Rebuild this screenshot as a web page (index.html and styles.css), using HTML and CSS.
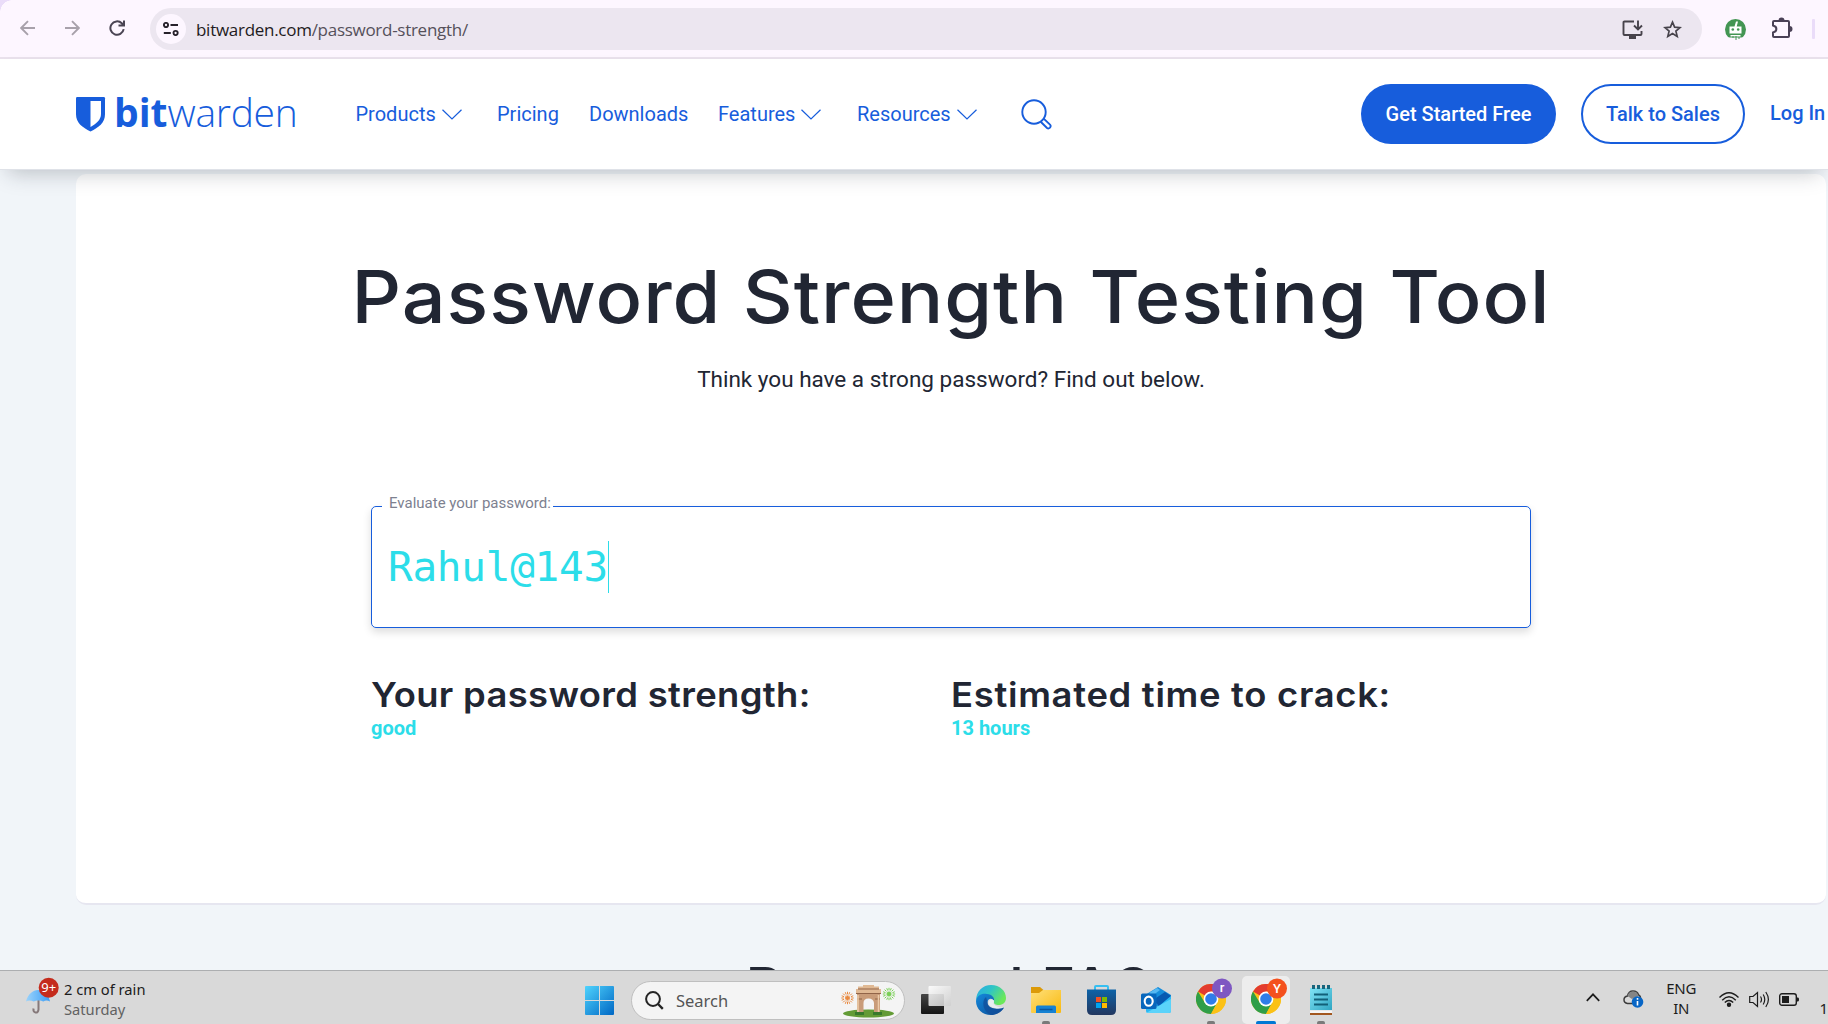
FILE: index.html
```html
<!DOCTYPE html>
<html lang="en">
<head>
<meta charset="utf-8">
<title>Password Strength Testing Tool | Bitwarden</title>
<link rel="stylesheet" href="styles.css">
</head>
<body>
<svg class="defs" width="0" height="0">
  <defs>
    <linearGradient id="win" x1="0" y1="0" x2="1" y2="1"><stop offset="0" stop-color="#4fd3fd"/><stop offset="1" stop-color="#0067c4"/></linearGradient>
    <linearGradient id="edgeTop" x1="0" y1="0" x2="1" y2=".5"><stop offset="0" stop-color="#2aa9e8"/><stop offset=".5" stop-color="#2fc5c5"/><stop offset="1" stop-color="#6be85a"/></linearGradient>
    <linearGradient id="edgeLow" x1="0" y1="0" x2="1" y2="1"><stop offset="0" stop-color="#1489dc"/><stop offset="1" stop-color="#0c4c95"/></linearGradient>
    <linearGradient id="folder" x1="0" y1="0" x2="1" y2="1"><stop offset="0" stop-color="#ffe07a"/><stop offset="1" stop-color="#f9b90f"/></linearGradient>
    <linearGradient id="store" x1="0" y1="0" x2="0" y2="1"><stop offset="0" stop-color="#0d63a8"/><stop offset="1" stop-color="#23375f"/></linearGradient>
    <linearGradient id="note" x1="0" y1="0" x2="1" y2="1"><stop offset="0" stop-color="#82e4f6"/><stop offset="1" stop-color="#2fa5c2"/></linearGradient>
    <linearGradient id="umb" x1="0" y1="0" x2="1" y2="0"><stop offset="0" stop-color="#9bd3fb"/><stop offset="1" stop-color="#3b9df5"/></linearGradient>
    <linearGradient id="dark" x1="0" y1="0" x2="0" y2="1"><stop offset="0" stop-color="#454545"/><stop offset="1" stop-color="#151515"/></linearGradient>
    <linearGradient id="light" x1="0" y1="0" x2="1" y2="1"><stop offset="0" stop-color="#fff"/><stop offset="1" stop-color="#cfcfcf"/></linearGradient>
    <symbol id="chrome" viewBox="0 0 30 30">
      <circle cx="15" cy="15" r="15" fill="#fbc116"/>
      <path d="M15 15 2 7.5A15 15 0 0 1 28 7.5L15 8z" fill="#e33b2e"/>
      <path d="M2 7.5A15 15 0 0 0 15 30L21.3 18.5 15 15 8.7 18.5z" fill="#2f9e48"/>
      <path d="M15 30A15 15 0 0 0 28 7.5H15L21.3 18.5z" fill="#fbc116"/>
      <circle cx="15" cy="15" r="7.4" fill="#fff"/>
      <circle cx="15" cy="15" r="5.8" fill="#2f7de9"/>
    </symbol>
    <symbol id="chev" viewBox="0 0 20 11"><path d="M.5.8 10 10 19.500.8" fill="none" stroke="#175ddc" stroke-width="1.2"/></symbol>
  </defs>
</svg>

<div class="toolbar">
  <div class="tab-corner"></div>
  <svg class="back" width="16" height="16" viewBox="0 0 16 16" fill="none" stroke="#a8a1ab" stroke-width="1.9"><path d="M15 8H1.500M8 1.200 1.200 8 8 14.800"/></svg>
  <svg class="fwd" width="16" height="16" viewBox="0 0 16 16" fill="none" stroke="#a8a1ab" stroke-width="1.900"><path d="M1 8h13.500M8 1.200 14.800 8 8 14.800"/></svg>
  <svg class="reload" width="16" height="16" viewBox="0 0 16 16" fill="none" stroke="#4a4453" stroke-width="2"><path d="M14.700 9.200A6.700 6.700 0 1 1 12.800 3.300L14.500 5M15 .5V5.500H9.500"/></svg>
  <div class="omnibox">
    <div class="site-info"><svg width="16" height="14" viewBox="0 0 16 14" fill="none" stroke="#27222b" stroke-width="1.900"><circle cx="3" cy="3" r="2.100"/><path d="M7.500 3H15M.8 11h7"/><circle cx="12.600" cy="11" r="2.100"/></svg></div>
    <div class="url"><span class="host">bitwarden.com</span><span class="path">/password-strength/</span></div>
    <svg class="install" width="21" height="19" viewBox="0 0 21 19" fill="none" stroke="#47434b" stroke-width="1.900"><path d="M12 1.500H2.500Q1.500 1.500 1.500 2.500V14Q1.500 15 2.500 15H18.500Q19.500 15 19.500 14V11M16 .5V9M12 5.500 16 9.500 20 5.500"/><path d="M7 17.500H14" stroke-width="3"/></svg>
    <svg class="star" width="19" height="19" viewBox="0 0 19 19" fill="none" stroke="#47434b" stroke-width="1.700"><path d="M9.500 2.200 11.600 7.100 17 7.600 12.900 11.100 14.200 16.400 9.500 13.600 4.800 16.400 6.100 11.100 2 7.600 7.400 7.100z"/></svg>
  </div>
  <svg class="bot" width="21" height="21" viewBox="0 0 21 21"><circle cx="10.500" cy="10.500" r="10.500" fill="#439553"/><path d="M4.500 7.500h5l1.500-5h2l-1.300 5H16.500V14.500H4.500zM5.500 16h10v1.600h-10z" fill="#fff"/><path d="M3 18.500h15L16 21H4z" fill="#fdf6ff"/><circle cx="7.800" cy="10.500" r="1.300" fill="#439553"/><circle cx="13.200" cy="10.500" r="1.300" fill="#439553"/><path d="M8 19v-2M11 21v-4M14 20v-2" stroke="#439553"/></svg>
  <svg class="puzzle" width="22" height="22" viewBox="0 0 22 22"><path d="M3.500 4H17Q18 4 18 5V19Q18 20 17 20H3Q2 20 2 19V15.500C6.500 14.500 6.500 9.500 2 8.500V5Q2 4 3 4z" fill="none" stroke="#4a4156" stroke-width="2"/><path d="M7.500 3.500a3 3 0 0 1 6 0zM18.500 9a3 3 0 0 1 0 6z" fill="#4a4156"/></svg>
  <div class="divider"></div>
</div>

<header class="site-header">
  <a class="logo">
    <svg width="30" height="35" viewBox="0 0 30 35"><path d="M1.200 0H27.800Q29 0 29 1.200V17C29 26 22.500 30.500 14.500 34.500 6.500 30.500 0 26 0 17V1.200Q0 0 1.200 0z" fill="#175ddc"/><path d="M14.500 4H25V17C25 23 20 26.700 14.500 30z" fill="#fff"/></svg>
    <span class="bit">bit</span><span class="warden">warden</span>
  </a>
  <nav class="nav">
    <a class="n1">Products<svg width="20" height="11"><use href="#chev"/></svg></a>
    <a class="n2">Pricing</a>
    <a class="n3">Downloads</a>
    <a class="n4">Features<svg width="20" height="11"><use href="#chev"/></svg></a>
    <a class="n5">Resources<svg width="20" height="11"><use href="#chev"/></svg></a>
    <svg class="search" width="31" height="31" viewBox="0 0 31 31" fill="none" stroke="#175ddc" stroke-width="1.900"><circle cx="13" cy="13" r="11.700"/><path d="M19.700 22.800 26 29Q27.500 30 29 28.600 30.300 27 29 25.700L22.700 19.600"/></svg>
  </nav>
  <div class="actions">
    <a class="btn primary">Get Started Free</a>
    <a class="btn outline">Talk to Sales</a>
    <a class="login">Log In</a>
  </div>
</header>

<main class="page">
  <section class="card">
    <h1>Password Strength Testing Tool</h1>
    <p class="sub">Think you have a strong password? Find out below.</p>
    <div class="field">
      <span class="label">Evaluate your password:</span>
      <span class="value">Rahul@143</span><span class="caret"></span>
    </div>
    <div class="results">
      <div><h3 class="r1">Your password strength:</h3><p>good</p></div>
      <div><h3 class="r2">Estimated time to crack:</h3><p>13 hours</p></div>
    </div>
  </section>
  <h2>Password FAQ</h2>
</main>

<footer class="taskbar">
  <div class="weather">
    <svg width="36" height="40" viewBox="0 0 36 40"><path d="M12.500 15V33.500Q12 37 9.500 36.500 7 36 7.500 32.500" fill="none" stroke="#86797a" stroke-width="2"/><path d="M0 25.500C2 18 7 14 12 14S22.500 18 24 25.500C22 24 19 24 17.500 25.500 15 24 10 24 7.500 25.500 5.500 24 2 24 0 25.500z" fill="url(#umb)"/><circle cx="22.700" cy="11.700" r="10" fill="#c42b1c"/><text x="22.800" y="16.300" text-anchor="middle" class="badge-text">9+</text></svg>
    <div class="weather-text"><span class="w1">2 cm of rain</span><span class="w2">Saturday</span></div>
  </div>
  <div class="apps">
    <div class="app"><svg width="29" height="29" viewBox="0 0 29 29"><path d="M1 0H14V14H0V1Q0 0 1 0zM15 0H28Q29 0 29 1V14H15zM0 15H14V29H1Q0 29 0 28zM15 15H29V28Q29 29 28 29H15z" fill="url(#win)"/></svg></div>
    <div class="searchbox">
      <svg width="19" height="19" viewBox="0 0 19 19" fill="none" stroke="#242424" stroke-width="2"><circle cx="8" cy="8" r="6.900"/><path d="M13 13 17.800 17.800" stroke-width="2.400"/></svg>
      <span>Search</span>
      <svg class="gate" width="58" height="34" viewBox="0 0 58 34">
        <g stroke="#e9893f" stroke-width="1" stroke-dasharray="2.500 1.200"><path d="M7.500 14V7M7.500 14V21M7.500 14H.5M7.500 14H14.500M7.500 14 2.500 9M7.500 14 12.500 19M7.500 14 12.500 9M7.500 14 2.500 19M7.500 14 5 7.500M7.500 14 10 20.500M7.500 14 10 7.500M7.500 14 5 20.500M7.500 14 1 11.500M7.500 14 14 16.500M7.500 14 14 11.500M7.500 14 1 16.500"/></g>
        <g stroke="#77cf52" stroke-width="1" stroke-dasharray="2.500 1.200"><path d="M49 10V3M49 10V17M49 10H42M49 10H56M49 10 44 5M49 10 54 15M49 10 54 5M49 10 44 15M49 10 46.500 3.500M49 10 51.500 16.500M49 10 51.500 3.500M49 10 46.500 16.500M49 10 42.500 7.500M49 10 55.500 12.500M49 10 55.500 7.500M49 10 42.500 12.500"/></g>
        <ellipse cx="28.500" cy="29.500" rx="25.500" ry="4" fill="#639b35"/>
        <path d="M17 30V9H40V30H34V19Q33.500 14.500 28.500 14.500T23.500 19V30z" fill="#c99c79"/>
        <path d="M16 5H41V9.500H16zM18 2.500H39V5H18zM23 1H34V3H23z" fill="#e0b994"/>
        <path d="M16 9.500H41M18 5H39M17 15H22M35 15H40" stroke="#916448" stroke-width="1.200"/>
        <path d="M18 11V29M38.500 11V29" stroke="#edcba9" stroke-width="1.500"/>
        <path d="M15 28H24V31H15zM33 28H42V31H33z" fill="#38792c"/>
      </svg>
    </div>
    <div class="app"><svg width="30" height="28" viewBox="0 0 30 28"><rect y="8" width="23" height="20" rx="1" fill="url(#dark)"/><rect x="7.500" y="0" width="22.500" height="20" rx="1" fill="url(#light)" opacity=".88"/></svg></div>
    <div class="app"><svg width="30" height="30" viewBox="0 0 30 30"><path d="M0 16C0 6 7 0 15 0 24 0 30 6 30 13 30 18 26 20.500 21.500 20 18.500 19.600 17.500 18.500 18 16.500 18.500 12 15 9.500 11 10 6 10 2 12 0 16z" fill="url(#edgeTop)"/><path d="M0 16C1 10 6 8 11 9 16 9.500 19 12.500 18 16.500 17.500 13.500 12.500 12 11.500 17 11 22 17 25.500 28 22.500 24.500 28 19.500 30 15 30 6.500 30 0 24 0 16z" fill="url(#edgeLow)"/><path d="M10 12C5 16 7 27 15 30 19.500 30 25 28 28 22.500 19 26 11.500 22.500 11.500 17z" fill="#114d99" opacity=".75"/><path d="M18 15.500C15.500 13.500 12.500 15 12.500 18 13.500 22.500 21 25 28.500 22.500 25 23 20.500 22 17.500 19z" fill="#e8eef2"/></svg></div>
    <div class="app"><svg width="30" height="26" viewBox="0 0 30 26"><path d="M0 0H9L13 3.500V10H0z" fill="#dc9a08"/><path d="M0 6H8L12 3H30V25Q30 26 29 26H1Q0 26 0 25z" fill="url(#folder)"/><path d="M5 26V20Q5 18.500 6.500 18.500H23.500Q25 18.500 25 20V26z" fill="#1682d3"/><path d="M8.500 22.500H21.500" stroke="#0c579f" stroke-width="1.500"/></svg><i class="dot"></i></div>
    <div class="app"><svg width="29" height="30" viewBox="0 0 29 30"><path d="M8 6V2Q8 1 9 1H20Q21 1 21 2V6" fill="none" stroke="#36bff1" stroke-width="2"/><path d="M0 4.500H29V25Q29 30 24 30H5Q0 30 0 25z" fill="url(#store)"/><path d="M9 12h5v5H9z" fill="#f25022"/><path d="M15 12h5v5h-5z" fill="#7fba00"/><path d="M9 18h5v5H9z" fill="#00a4ef"/><path d="M15 18h5v5h-5z" fill="#ffb900"/></svg></div>
    <div class="app"><svg width="30" height="26" viewBox="0 0 30 26"><path d="M4 8 17 0 30 8V14L17 20 4 14z" fill="#168ddb"/><path d="M8 6 16 1 19 3 11 9z" fill="#55b8f2"/><path d="M12 13 24 5 30 9 18 19z" fill="#0759b1"/><path d="M5 13 17 20 30 9V24Q30 26 28 26H7Q5 26 5 24z" fill="#2bb8f3"/><path d="M5 26 30 12V24Q30 26 28 26z" fill="#5bd3fa"/><rect y="6.500" width="15.500" height="15.500" rx="1.500" fill="#0767bd"/><ellipse cx="7.700" cy="14.200" rx="4" ry="4.600" fill="none" stroke="#fff" stroke-width="2.100"/></svg></div>
    <div class="app"><svg class="chrome" width="40" height="38" viewBox="0 0 40 38"><use href="#chrome" x="0" y="7" width="30" height="30"/><circle cx="26" cy="11.500" r="10" fill="#7e57c2"/><text x="26" y="15.300" text-anchor="middle" class="profile">r</text></svg><i class="dot"></i></div>
    <div class="app active"><svg class="chrome" width="40" height="38" viewBox="0 0 40 38"><use href="#chrome" x="0" y="7" width="30" height="30"/><circle cx="26" cy="11.500" r="10" fill="#f4511e"/><text x="26" y="15.800" text-anchor="middle" class="profile">Y</text></svg><i class="dot"></i></div>
    <div class="app"><svg width="22" height="30" viewBox="0 0 22 30"><path d="M0 3H22V25H0z" fill="url(#note)"/><path d="M0 25.500H22V28H0z" fill="#f5f5f5"/><path d="M0 28H22V30H0z" fill="#a2571f"/><path d="M4 9.500H18M4 14.500H18M4 19.500H18" stroke="#126078" stroke-width="1.800"/><path d="M3.500 0V4M8.500 0V4M13.500 0V4M18.500 0V4" stroke="#17667d" stroke-width="3"/></svg><i class="dot"></i></div>
  </div>
  <div class="tray">
    <svg class="up" width="14" height="9" viewBox="0 0 14 9" fill="none" stroke="#1c1c1c" stroke-width="1.700"><path d="M.8 7.800 7 1.300 13.200 7.800"/></svg>
    <svg class="cloud" width="21" height="18" viewBox="0 0 21 18"><path d="M4.500 13.500Q1 13 1 9.800T4.500 6Q5.500 1 10 1T15.500 5Q18 6 17.500 10L12 13.500z" fill="#dadada" stroke="#3c3c3c" stroke-width="1.500"/><path d="M4.500 6Q5.500 1.500 10 1.500T15.500 6L9 9z" fill="#858585"/><circle cx="14.500" cy="12" r="5.800" fill="#0866c6"/><path d="M14.500 11v4.500M14.500 8v1.800" stroke="#fff" stroke-width="1.600"/></svg>
    <div class="lang"><span>ENG</span><span>IN</span></div>
    <svg class="wifi" width="20" height="15" viewBox="0 0 20 15" fill="none" stroke="#1c1c1c" stroke-width="1.400"><path d="M.5 5.500Q10-4 19.500 5.500M3.200 8.200Q10 1.500 16.800 8.200M5.800 10.600Q10 6.500 14.200 10.600"/><circle cx="10" cy="12.700" r="1.500" fill="#1c1c1c"/></svg>
    <svg class="sound" width="21" height="17" viewBox="0 0 21 17" fill="none" stroke="#1c1c1c" stroke-width="1.200"><path d="M.7 5.500H4L8.500 1.500V15.500L4 11.500H.7zM11.500 5.500Q13.500 8.500 11.500 11.500M14.200 3.500Q17.300 8.500 14.200 13.500M16.800 1Q22 8.500 16.800 16"/></svg>
    <svg class="battery" width="20" height="13" viewBox="0 0 20 13"><rect x=".7" y=".7" width="16.600" height="11.600" rx="2.300" fill="none" stroke="#1c1c1c" stroke-width="1.400"/><path d="M3 3H10V10H3z" fill="#1c1c1c"/><path d="M18 4.500H19Q20 4.500 20 6.500T19 8.500H18z" fill="#1c1c1c"/></svg>
    <span class="clock">1</span>
  </div>
</footer>
</body>
</html>
```
FILE: styles.css
```css
* { box-sizing: border-box; margin: 0; padding: 0; }
body { width: 1828px; height: 1024px; overflow: hidden; display: flex; flex-direction: column; background: #f1f5f9; font-family: Roboto, sans-serif; color: #212633; }
svg { display: block; flex: none; }
.defs { position: absolute; }
span, a, h1, h2, h3, p { white-space: nowrap; }

.toolbar { position: relative; height: 59px; flex: none; display: flex; align-items: flex-start; background: #fdf6ff; border-bottom: 2px solid #e9e1ec; }
.tab-corner { position: absolute; left: 0; top: 0; width: 12px; height: 12px; background: radial-gradient(circle at 12px 12px, #fdf6ff 11.500px, #eadcf9 12px); }
.back { margin: 20px 0 0 20px; }
.fwd { margin: 20px 0 0 28px; }
.reload { margin: 20px 0 0 29px; }
.omnibox { margin: 8px 0 0 25px; width: 1552px; height: 42px; border-radius: 21px; background: #ece6f0; display: flex; align-items: center; padding-left: 6px; }
.site-info { width: 30px; height: 30px; border-radius: 50%; background: #fdf6ff; display: grid; place-items: center; }
.url { margin: 2px 0 0 10px; width: 1420px; font: 17px/26px "Open Sans", sans-serif; letter-spacing: -.28px; color: #1f1b22; }
.path { color: #55505a; }
.install { margin-left: 6px; }
.star { margin-left: 20px; }
.bot { margin: 19px 0 0 23px; }
.puzzle { margin: 17px 0 0 25px; }
.divider { width: 3px; height: 20px; margin: 19px 0 0 19px; background: #eadcf9; border-radius: 1px; }

.site-header { position: relative; z-index: 2; height: 111px; flex: none; display: flex; align-items: center; background: #fff; border-bottom: 1px solid #dfe2e8; box-shadow: 0 11px 20px -8px rgba(30, 40, 50, .26); color: #175ddc; }
.logo { width: 220px; margin-left: 76px; display: flex; align-items: center; font-family: "Open Sans", sans-serif; font-size: 39px; line-height: 40px; }
.logo span { margin-top: -4px; }
.logo .bit { font-weight: 700; margin-left: 8px; }
.warden { font-weight: 300; letter-spacing: -.3px; }
.nav { display: flex; align-items: center; margin-left: 59.500px; width: 1005.500px; font-size: 20px; line-height: 28px; }
.nav a { display: flex; align-items: center; gap: 6px; flex: none; }
.n1 { width: 141.500px; } .n2 { width: 92px; } .n3 { width: 129px; } .n4 { width: 139px; } .n5 { width: 164px; }
.actions { display: flex; align-items: center; font-weight: 500; font-size: 20px; }
.btn { height: 60px; border-radius: 30px; display: grid; place-items: center; flex: none; }
.primary { width: 195px; background: #175ddc; color: #fff; }
.outline { width: 164px; margin-left: 25px; border: 2px solid #175ddc; }
.login { margin: -2px 0 0 25px; }

.page { flex: 1; min-height: 0; overflow: hidden; padding: 4px 2px 0 76px; }
.card { height: 731px; padding: 78px 0 0; background: #fff; border-radius: 10px; border-bottom: 2px solid #e6e6f0; }
h1 { font: 500 73px/90px Inter, sans-serif; text-align: center; letter-spacing: .87px; transform: scaleX(1.06); }
.sub { margin-top: 22px; text-align: center; font-size: 22.500px; line-height: 30px; }
.field { position: relative; margin: 112px 0 0 295px; width: 1160px; height: 122px; border: 1px solid #175ddc; border-radius: 5px; box-shadow: 0 4px 8px rgba(0, 0, 0, .14); display: flex; align-items: center; padding-left: 16px; }
.label { position: absolute; left: 10px; top: -15px; padding: 0 2px 0 7px; background: #fff; font-size: 15px; line-height: 22px; color: #7d8190; }
.value { font: 41px/52px "DejaVu Sans Mono", monospace; color: #2cdde9; letter-spacing: -.25px; }
.caret { width: 1px; height: 52px; background: #2cdde9; }
.results { display: grid; grid-template-columns: 580px 580px; margin: 44px 0 0 295px; }
h3 { font: 600 34px/46px Inter, sans-serif; transform: scaleX(1.07); transform-origin: 0 0; }
.r1 { letter-spacing: .32px; }
.r2 { letter-spacing: .65px; }
.results p { font-weight: 700; font-size: 20px; line-height: 20px; color: #2cdde9; }
h2 { font: 500 56px/70px Inter, sans-serif; text-align: center; margin-top: 48px; letter-spacing: 1px; transform: scaleX(1.033); }

.taskbar { position: relative; z-index: 3; height: 54px; flex: none; display: grid; grid-template-columns: 575px 999px 254px; background: #d9d9d9; border-top: 1px solid #acaeb0; font-family: "Noto Sans", sans-serif; color: #1c1c1c; overflow: hidden; }
.weather { display: flex; padding-left: 26px; font-size: 14.700px; line-height: 20px; }
.weather svg { margin-top: 5px; }
.weather-text { display: flex; flex-direction: column; margin: 8px 0 0 2px; }
.w2 { color: #616161; }
.badge-text { font: 13px "Noto Sans", sans-serif; fill: #fff; }
.apps { display: flex; gap: 7px; padding-top: 5px; }
.app { position: relative; width: 48px; height: 48px; display: grid; place-items: center; border-radius: 5px; }
.app.active { background: #ededed; }
.chrome { margin: -8px 0 0 9px; }
.profile { font: 500 13px Roboto, sans-serif; fill: #fff; }
.dot { position: absolute; left: 20px; bottom: -1px; width: 8px; height: 4px; border-radius: 2px; background: #7a7a7a; }
.active .dot { left: 14px; width: 20px; background: #0078d4; }
.searchbox { width: 274px; height: 39px; margin: 5px 0 0 1px; padding-left: 13px; border: 1px solid #bfbfbf; border-radius: 20px; background: #f4f4f4; display: flex; align-items: center; }
.searchbox span { margin-left: 12px; width: 164px; font-size: 16.500px; color: #555; }
.tray { display: flex; align-items: center; font-size: 15px; line-height: 20px; }
.up { margin-left: 12px; }
.cloud { margin: 3px 0 0 23px; }
.lang { width: 40px; margin: 0 0 0 19px; display: flex; flex-direction: column; align-items: center; padding-top: 1px; letter-spacing: -.3px; }
.lang span { transform: translateX(2px); }
.wifi { margin: 3px 0 0 24px; }
.sound { margin: 3px 0 0 10px; }
.battery { margin: 3px 0 0 9px; }
.clock { margin: 20px 0 0 20px; }
```
